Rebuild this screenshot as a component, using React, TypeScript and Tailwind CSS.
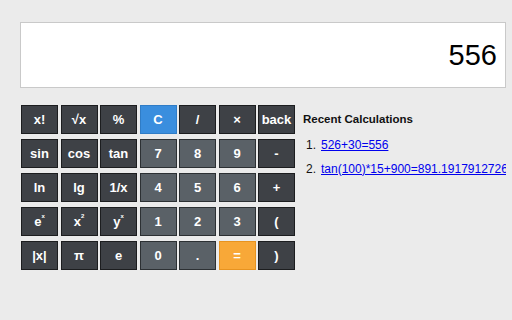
import React from 'react'

type Kind = 'fn' | 'num' | 'clear' | 'equals'

interface Key {
  label: React.ReactNode
  kind: Kind
}

const sup = (base: string, exp: string) => (
  <span>
    {base}
    <sup className="text-[6px] align-super">{exp}</sup>
  </span>
)

const keys: Key[] = [
  { label: 'x!', kind: 'fn' },
  { label: '√x', kind: 'fn' },
  { label: '%', kind: 'fn' },
  { label: 'C', kind: 'clear' },
  { label: '/', kind: 'fn' },
  { label: '×', kind: 'fn' },
  { label: 'back', kind: 'fn' },

  { label: 'sin', kind: 'fn' },
  { label: 'cos', kind: 'fn' },
  { label: 'tan', kind: 'fn' },
  { label: '7', kind: 'num' },
  { label: '8', kind: 'num' },
  { label: '9', kind: 'num' },
  { label: '-', kind: 'fn' },

  { label: 'ln', kind: 'fn' },
  { label: 'lg', kind: 'fn' },
  { label: '1/x', kind: 'fn' },
  { label: '4', kind: 'num' },
  { label: '5', kind: 'num' },
  { label: '6', kind: 'num' },
  { label: '+', kind: 'fn' },

  { label: sup('e', 'x'), kind: 'fn' },
  { label: sup('x', '2'), kind: 'fn' },
  { label: sup('y', 'x'), kind: 'fn' },
  { label: '1', kind: 'num' },
  { label: '2', kind: 'num' },
  { label: '3', kind: 'num' },
  { label: '(', kind: 'fn' },

  { label: '|x|', kind: 'fn' },
  { label: 'π', kind: 'fn' },
  { label: 'e', kind: 'fn' },
  { label: '0', kind: 'num' },
  { label: '.', kind: 'num' },
  { label: '=', kind: 'equals' },
  { label: ')', kind: 'fn' },
]

const kindClasses: Record<Kind, string> = {
  fn: 'bg-[#3e4146] border-[#1c1d1f]',
  num: 'bg-[#5a6167] border-[#2c3033]',
  clear: 'bg-[#3a8ede] border-[#2f7cc6]',
  equals: 'bg-[#f8a838] border-[#e79320]',
}

const history = ['526+30=556', 'tan(100)*15+900=891.1917912726461']

export default function App() {
  return (
    <div className="w-[512px] h-[320px] overflow-hidden bg-[#ebebeb] pt-[22px] pl-[20px] pr-[6px] font-['Liberation_Sans',Arial,sans-serif]">
      {/* Display */}
      <div className="h-[66px] bg-white border border-[#c9c9c9] flex items-center justify-end pr-[8px]">
        <span className="text-[29px] text-black leading-none">556</span>
      </div>

      <div className="flex mt-[17px]">
        {/* Keypad */}
        <div className="ml-[1px] grid grid-cols-[repeat(7,37px)] auto-rows-[29px] gap-x-[2.5px] gap-y-[5px] shrink-0">
          {keys.map((k, i) => (
            <button
              key={i}
              className={`border flex items-center justify-center text-white font-bold text-[13px] leading-none ${kindClasses[k.kind]}`}
            >
              {k.label}
            </button>
          ))}
        </div>

        {/* History */}
        <div className="ml-[8px] min-w-0 flex-1 overflow-hidden">
          <div className="mt-[9px] text-[11.5px] font-bold text-[#111] leading-none">Recent Calculations</div>
          <ol className="mt-[13px] text-[12px] leading-none">
            {history.map((h, i) => (
              <li key={i} className="flex h-[24px] items-start whitespace-nowrap">
                <span className="w-[18px] shrink-0 pl-[3px] text-[#111]">{i + 1}.</span>
                <a href="#" className="text-[#0000ee] underline">
                  {h}
                </a>
              </li>
            ))}
          </ol>
        </div>
      </div>
    </div>
  )
}
